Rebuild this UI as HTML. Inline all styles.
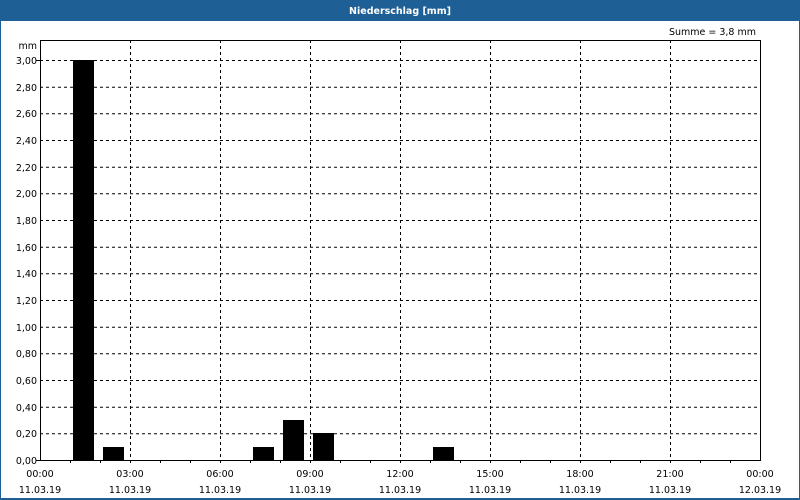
<!DOCTYPE html>
<html><head><meta charset="utf-8"><style>
html,body{margin:0;padding:0;width:800px;height:500px;overflow:hidden;background:#fff}
svg text{font-family:"DejaVu Sans","Liberation Sans",sans-serif;font-size:9.5px;fill:#000}
</style></head><body>
<svg width="800" height="500" xmlns="http://www.w3.org/2000/svg">
<rect x="0" y="0" width="800" height="500" fill="#1e6096"/>
<rect x="1" y="21" width="798" height="477" fill="#fff"/>
<text x="400" y="14" text-anchor="middle" style="fill:#fff;font-weight:bold;font-size:9.5px">Niederschlag [mm]</text>
<text x="756" y="35" text-anchor="end">Summe = 3,8 mm</text>
<text x="37" y="49" text-anchor="end">mm</text>
<g stroke="#000" stroke-width="1" stroke-dasharray="3,3" fill="none">
<path d="M40 60.5H760M40 87.2H760M40 113.8H760M40 140.5H760M40 167.2H760M40 193.8H760M40 220.5H760M40 247.2H760M40 273.8H760M40 300.5H760M40 327.2H760M40 353.8H760M40 380.5H760M40 407.2H760M40 433.8H760"/>
<path d="M130.5 40V460M220.5 40V460M310.5 40V460M400.5 40V460M490.5 40V460M580.5 40V460M670.5 40V460"/>
</g>
<rect x="40.5" y="40.5" width="720" height="420" fill="none" stroke="#000"/>
<g stroke="#000">
<path d="M70.5 460V463M100.5 460V463M130.5 460V463M160.5 460V463M190.5 460V463M220.5 460V463M250.5 460V463M280.5 460V463M310.5 460V463M340.5 460V463M370.5 460V463M400.5 460V463M430.5 460V463M460.5 460V463M490.5 460V463M520.5 460V463M550.5 460V463M580.5 460V463M610.5 460V463M640.5 460V463M670.5 460V463M700.5 460V463M730.5 460V463M36 60.5H40M36 460.5H40"/>
</g>
<g fill="#000">
<rect x="73" y="60" width="21" height="400"/>
<rect x="103" y="447" width="21" height="13"/>
<rect x="253" y="447" width="21" height="13"/>
<rect x="283" y="420" width="21" height="40"/>
<rect x="313" y="433" width="21" height="27"/>
<rect x="433" y="447" width="21" height="13"/>
</g>
<g text-anchor="end">
<text x="37" y="64">3,00</text><text x="37" y="91">2,80</text><text x="37" y="117">2,60</text><text x="37" y="144">2,40</text><text x="37" y="171">2,20</text><text x="37" y="197">2,00</text><text x="37" y="224">1,80</text><text x="37" y="251">1,60</text><text x="37" y="277">1,40</text><text x="37" y="304">1,20</text><text x="37" y="331">1,00</text><text x="37" y="357">0,80</text><text x="37" y="384">0,60</text><text x="37" y="411">0,40</text><text x="37" y="437">0,20</text><text x="37" y="464">0,00</text>
</g>
<g text-anchor="middle">
<text x="40" y="477">00:00</text><text x="130" y="477">03:00</text><text x="220" y="477">06:00</text><text x="310" y="477">09:00</text><text x="400" y="477">12:00</text><text x="490" y="477">15:00</text><text x="580" y="477">18:00</text><text x="670" y="477">21:00</text><text x="760" y="477">00:00</text>
<text x="40" y="493">11.03.19</text><text x="130" y="493">11.03.19</text><text x="220" y="493">11.03.19</text><text x="310" y="493">11.03.19</text><text x="400" y="493">11.03.19</text><text x="490" y="493">11.03.19</text><text x="580" y="493">11.03.19</text><text x="670" y="493">11.03.19</text><text x="760" y="493">12.03.19</text>
</g>
</svg>
</body></html>
